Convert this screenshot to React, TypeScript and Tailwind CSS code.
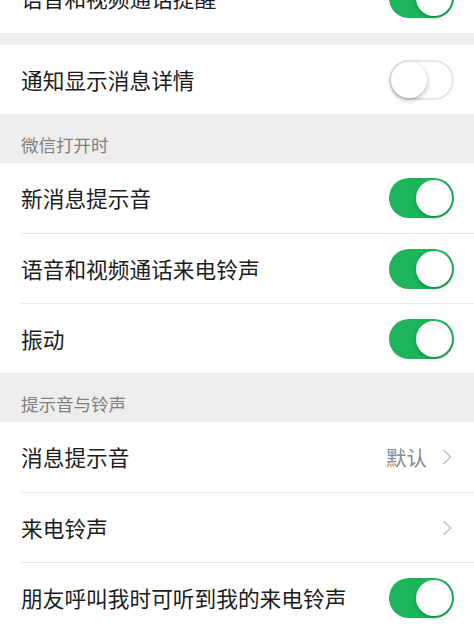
import React from 'react';

const FONT = '"Noto Sans CJK SC", "Noto Sans", sans-serif';

/* ── iOS-style switch ─────────────────────────────── */
function Toggle({ on }: { on: boolean }) {
  return on ? (
    <div className="relative h-[40px] w-[65px] shrink-0 rounded-full bg-[#1db45a]">
      <div className="absolute right-[2px] top-[2px] h-[36px] w-[36px] rounded-full bg-white shadow-[0_2px_4px_rgba(0,0,0,0.25)]" />
    </div>
  ) : (
    <div className="relative h-[40px] w-[65px] shrink-0 rounded-full border-2 border-[#e6e6e6] bg-white">
      <div className="absolute left-0 top-0 h-[36px] w-[36px] rounded-full bg-white shadow-[0_2px_5px_rgba(0,0,0,0.3)]" />
    </div>
  );
}

function Chevron() {
  return (
    <svg width="10" height="16" viewBox="0 0 10 16" className="shrink-0">
      <polyline points="1.5,1 8.5,8 1.5,15" fill="none" stroke="#c4c4c4" strokeWidth="1.6" />
    </svg>
  );
}

type Row = { label: string; on?: boolean; value?: string; link?: boolean };

function Group({ rows, first = '' }: { rows: Row[]; first?: string }) {
  return (
    <div className={`bg-white pl-[21px] ${first}`}>
      {rows.map((r, i) => (
        <div
          key={r.label}
          className={`flex h-[70px] items-center justify-between pr-[20px] ${
            i > 0 ? 'border-t border-[#e6e6e6]' : ''
          }`}
        >
          <span className="text-[21.7px] leading-none text-[#1c1c1c]">{r.label}</span>
          {r.link ? (
            <div className="flex items-center gap-[15px] pr-[2px]">
              {r.value && <span className="text-[20.5px] leading-none text-[#8a8a8a]">{r.value}</span>}
              <Chevron />
            </div>
          ) : (
            <Toggle on={!!r.on} />
          )}
        </div>
      ))}
    </div>
  );
}

function Header({ title }: { title: string }) {
  return (
    <div className="flex h-[49px] items-end bg-[#ededed] pb-[8px] pl-[21px]">
      <span className="text-[17.5px] leading-[20px] text-[#808080]">{title}</span>
    </div>
  );
}

export default function App() {
  return (
    <div className="h-[632px] w-[474px] overflow-hidden bg-[#ededed]" style={{ fontFamily: FONT }}>
      <Group first="-mt-[37px]" rows={[{ label: '语音和视频通话提醒', on: true }]} />
      <div className="h-[12px]" />
      <div className="bg-white pl-[21px]">
        <div className="flex h-[69px] items-center justify-between pr-[20px]">
          <span className="text-[21.7px] leading-none text-[#1c1c1c]">通知显示消息详情</span>
          <Toggle on={false} />
        </div>
      </div>
      <Header title="微信打开时" />
      <Group
        rows={[
          { label: '新消息提示音', on: true },
          { label: '语音和视频通话来电铃声', on: true },
          { label: '振动', on: true },
        ]}
      />
      <Header title="提示音与铃声" />
      <Group
        rows={[
          { label: '消息提示音', link: true, value: '默认' },
          { label: '来电铃声', link: true },
          { label: '朋友呼叫我时可听到我的来电铃声', on: true },
        ]}
      />
    </div>
  );
}
